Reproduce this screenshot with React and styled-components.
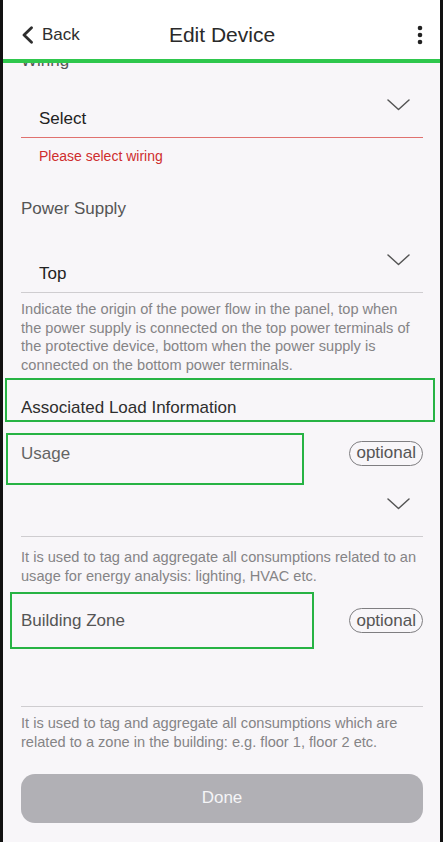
import React from "react";
import styled, { createGlobalStyle } from "styled-components";

const GlobalStyle = createGlobalStyle`
  html, body { margin: 0; padding: 0; background: #121212; }
  body { font-family: "Liberation Sans", Arial, Helvetica, sans-serif; -webkit-font-smoothing: antialiased; }
  * { box-sizing: border-box; }
`;

const Frame = styled.div`
  height: 842px;
  border-left: 3px solid #121212;
  border-right: 3px solid #121212;
  background: #f8f6f9;
  display: flex;
  flex-direction: column;
  overflow: hidden;
`;

const Header = styled.header`
  flex-shrink: 0;
  height: 63px;
  padding: 10px 17px 0 18px;
  background: #fff;
  border-bottom: 4px solid #2fc74d;
  display: grid;
  grid-template-columns: 1fr auto 1fr;
  align-items: center;
  position: relative;
  z-index: 1;
`;

const BackButton = styled.button`
  justify-self: start;
  display: flex;
  align-items: center;
  gap: 8px;
  border: 0;
  background: none;
  padding: 0;
  font: inherit;
  font-size: 17px;
  color: #2e2e2e;
`;

const Title = styled.h1`
  margin: 0;
  font-size: 21px;
  font-weight: 400;
  color: #2a2a2a;
`;

const MenuButton = styled.button`
  justify-self: end;
  border: 0;
  background: none;
  padding: 0;
  display: flex;
`;

const Content = styled.main`
  flex: 1;
  overflow: hidden;
`;

const Scroller = styled.div`
  margin-top: -13px;
  padding: 0 17px 0 18px;
  display: flex;
  flex-direction: column;
`;

const Label = styled.div`
  margin-top: ${(p) => p.$mt || 0}px;
  font-size: 17px;
  line-height: 22px;
  color: ${(p) => p.$color || "#555"};
`;

const SelectBox = styled.div`
  margin-top: ${(p) => p.$mt || 0}px;
  height: 53px;
  display: flex;
  justify-content: space-between;
  border-bottom: 1px solid ${(p) => (p.$error ? "#e0716f" : "#cfcdd0")};
`;

const Value = styled.span`
  align-self: flex-end;
  padding: 0 0 8px 18px;
  font-size: 17px;
  line-height: 20px;
  color: #222;
`;

const Chevron = styled.svg`
  align-self: flex-start;
  margin: 14px 13px 0 0;
  width: 23px;
  height: 12px;
`;

const ErrorText = styled.div`
  margin-top: 10px;
  padding-left: 18px;
  font-size: 14px;
  line-height: 16px;
  color: #cf2d2d;
`;

const Helper = styled.p`
  margin: ${(p) => p.$mt || 0}px 6px 0 0;
  font-size: 14.6px;
  line-height: 18.7px;
  color: #858486;
`;

const SectionTitle = styled.div`
  margin: 3px -12px 0 -16px;
  height: 44px;
  padding: 17px 0 0 14px;
  border: 2px solid #27b344;
  font-size: 17px;
  line-height: 22px;
  color: #2e2e2e;
`;

const FieldRow = styled.div`
  margin-top: ${(p) => p.$mt || 0}px;
  display: flex;
  justify-content: space-between;
  align-items: flex-start;
`;

const HighlightLabel = styled.div`
  margin-left: ${(p) => p.$ml}px;
  width: ${(p) => p.$w}px;
  height: ${(p) => p.$h}px;
  padding: ${(p) => p.$pt}px 0 0 ${(p) => p.$pl}px;
  border: 2px solid #27b344;
  font-size: 17px;
  line-height: 22px;
  color: ${(p) => p.$color || "#5a5a5a"};
`;

const Pill = styled.span`
  margin-top: ${(p) => p.$mt}px;
  height: 25px;
  padding: 0 6px;
  border: 1.6px solid #7f7e81;
  border-radius: 13px;
  display: flex;
  align-items: center;
  font-size: 17px;
  color: #555;
`;

const DoneButton = styled.button`
  margin-top: 22px;
  height: 49px;
  border: 0;
  border-radius: 14px;
  background: #b1b0b5;
  font: inherit;
  font-size: 17px;
  color: #f5f5f7;
`;

const ChevronDown = () => (
  <Chevron viewBox="0 0 23 12" fill="none">
    <polyline points="1,1 11.5,10.5 22,1" stroke="#555" strokeWidth="1.5" strokeLinecap="round" strokeLinejoin="round" />
  </Chevron>
);

const Select = ({ value, error, chevron = true, mt }) => (
  <SelectBox $error={error} $mt={mt}>
    <Value>{value}</Value>
    {chevron && <ChevronDown />}
  </SelectBox>
);

export default function App() {
  return (
    <>
      <GlobalStyle />
      <Frame>
        <Header>
          <BackButton>
            <svg width="13" height="18" viewBox="0 0 13 18" fill="none">
              <polyline points="10.5,1.8 3,9 10.5,16.2" stroke="#2e2e2e" strokeWidth="2.8" strokeLinecap="round" strokeLinejoin="round" />
            </svg>
            Back
          </BackButton>
          <Title>Edit Device</Title>
          <MenuButton aria-label="More">
            <svg width="6" height="20" viewBox="0 0 6 20">
              <circle cx="3" cy="3" r="2.3" fill="#222" />
              <circle cx="3" cy="10" r="2.3" fill="#222" />
              <circle cx="3" cy="17" r="2.3" fill="#222" />
            </svg>
          </MenuButton>
        </Header>
        <Content>
          <Scroller>
            <Label $color="#555">Wiring</Label>
            <Select value="Select" error mt={13} />
            <ErrorText>Please select wiring</ErrorText>

            <Label $mt={34}>Power Supply</Label>
            <Select value="Top" mt={20} />
            <Helper $mt={7}>
              Indicate the origin of the power flow in the panel, top when the power supply is connected on the top power terminals of the protective device, bottom when the power supply is connected on the bottom power terminals.
            </Helper>

            <SectionTitle>Associated Load Information</SectionTitle>

            <FieldRow $mt={11}>
              <HighlightLabel $ml={-15} $w={298} $h={52} $pt={8} $pl={13} $color="#646464">
                Usage
              </HighlightLabel>
              <Pill $mt={8}>optional</Pill>
            </FieldRow>
            <Select value="" mt={-1} />
            <Helper $mt={11}>
              It is used to tag and aggregate all consumptions related to an usage for energy analysis: lighting, HVAC etc.
            </Helper>

            <FieldRow $mt={7}>
              <HighlightLabel $ml={-11} $w={304} $h={57} $pt={16} $pl={9} $color="#555">
                Building Zone
              </HighlightLabel>
              <Pill $mt={16}>optional</Pill>
            </FieldRow>
            <Select value="" chevron={false} mt={5} />
            <Helper $mt={7}>
              It is used to tag and aggregate all consumptions which are related to a zone in the building: e.g. floor 1, floor 2 etc.
            </Helper>

            <DoneButton>Done</DoneButton>
          </Scroller>
        </Content>
      </Frame>
    </>
  );
}
